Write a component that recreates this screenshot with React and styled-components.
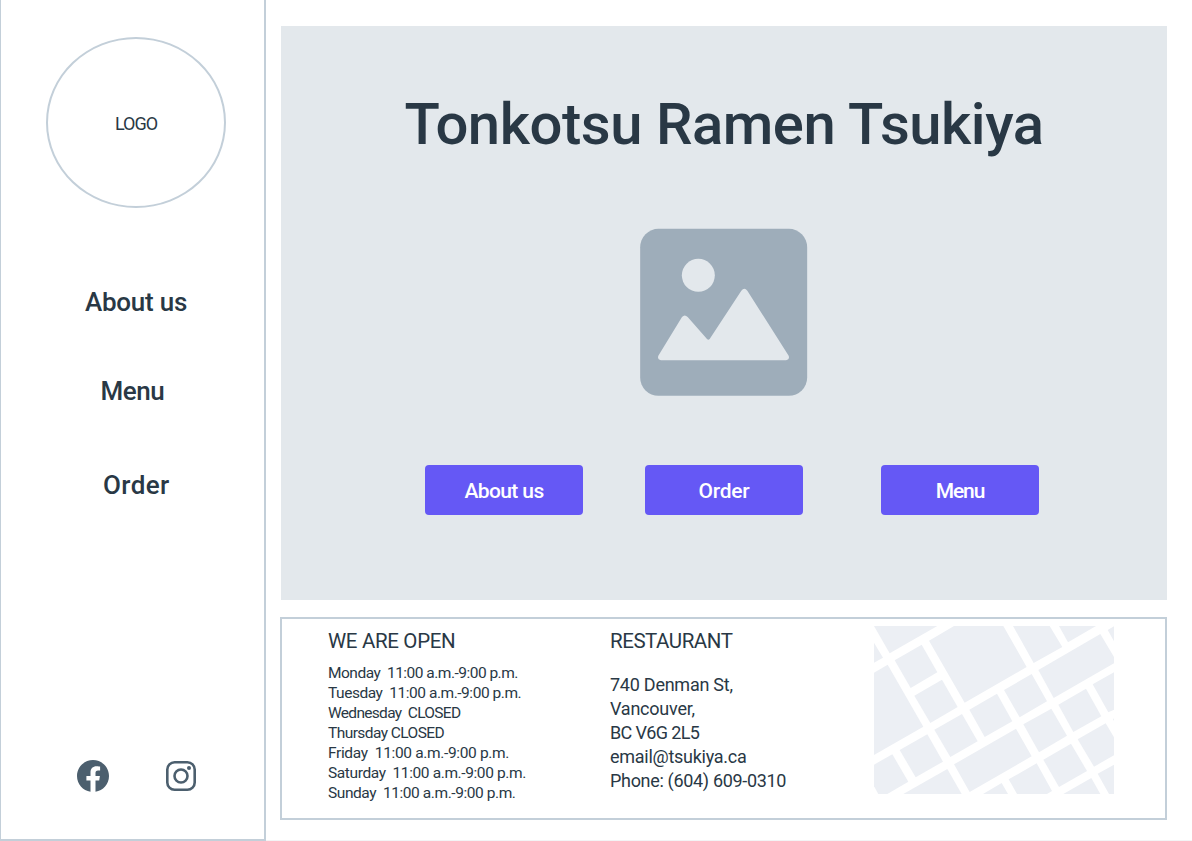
import React from "react";
import styled, { createGlobalStyle } from "styled-components";

const ink = "#293845";
const line = "#c3cfd9";
const fog = "#e3e8ec";
const accent = "#6558f5";

const GlobalStyle = createGlobalStyle`
  *, *::before, *::after { box-sizing: border-box; }
  html, body { margin: 0; padding: 0; background: #fff; }
  body {
    font-family: Roboto, "Liberation Sans", sans-serif;
    color: ${ink};
    overflow: hidden;
  }
`;

const Page = styled.div`
  display: flex;
  width: 1192px;
  height: 841px;
`;

const Sidebar = styled.aside`
  display: flex;
  flex-direction: column;
  flex: none;
  width: 266px;
  padding: 37px 0 47px;
  border: solid ${line};
  border-width: 0 2px 2px 1px;
`;

const Logo = styled.div`
  display: flex;
  align-items: center;
  justify-content: center;
  width: 180px;
  height: 171px;
  margin-left: 45px;
  padding-top: 1px;
  border: 2px solid ${line};
  border-radius: 50%;
  font-size: 18px;
  letter-spacing: -1px;
`;

const Nav = styled.nav`
  display: flex;
  flex-direction: column;
  align-items: flex-start;
  margin-top: 78px;
`;

const NavLink = styled.a`
  margin: ${(p) => p.$gap}px 0 0 ${(p) => p.$indent}px;
  font-size: 26px;
  font-weight: 500;
  line-height: 32px;
  letter-spacing: ${(p) => p.$tracking}px;
  white-space: nowrap;
`;

const Social = styled.div`
  display: flex;
  align-items: center;
  gap: 57px;
  margin-top: auto;
  padding-left: 76px;
`;

const Icon = styled.svg`
  display: block;
  flex: none;
  width: ${(p) => p.$w}px;
  height: ${(p) => p.$h}px;
`;

const Main = styled.main`
  display: flex;
  flex-direction: column;
  flex: 1;
  padding: 26px 25px 0 14px;
  border-bottom: 1px solid #f3f4f5;
`;

const Hero = styled.section`
  display: flex;
  flex-direction: column;
  align-items: center;
  height: 574px;
  margin-left: 1px;
  padding-top: 64px;
  background: ${fog};
`;

const Title = styled.h1`
  margin: 0 0 70px;
  font-size: 58px;
  font-weight: 500;
  line-height: 68px;
  letter-spacing: -0.46px;
  white-space: nowrap;
`;

const Actions = styled.div`
  display: flex;
  align-self: flex-start;
  margin: 69px 0 0 144px;
`;

const Button = styled.button`
  width: 158px;
  height: 50px;
  margin: 0 0 0 ${(p) => p.$gap}px;
  padding: 2px 0 0;
  border: 0;
  border-radius: 4px;
  background: ${accent};
  color: #fff;
  font: 500 21px Roboto, "Liberation Sans", sans-serif;
  letter-spacing: ${(p) => p.$tracking}px;
`;

const Footer = styled.footer`
  display: flex;
  align-items: flex-start;
  height: 203px;
  margin-top: 17px;
  padding-left: 46px;
  border: 2px solid ${line};
`;

const Column = styled.div`
  flex: none;
  width: ${(p) => p.$width}px;
  padding-top: 10px;
`;

const Heading = styled.h2`
  margin: 0;
  font-size: 20.5px;
  font-weight: 400;
  line-height: 24px;
  letter-spacing: ${(p) => p.$tracking}px;
`;

const Hours = styled.div`
  margin-top: 10px;
  font-size: 15.5px;
  line-height: 20px;
`;

const Address = styled.address`
  margin-top: 20px;
  font-size: 18px;
  font-style: normal;
  line-height: 24px;
`;

const Line = styled.div`
  letter-spacing: ${(p) => p.$tracking}px;
  white-space: pre;
`;

const MapArt = styled(Icon)`
  margin-top: 7px;
`;

const navLinks = [
  { label: "About us", gap: 0, indent: 84, tracking: -0.25 },
  { label: "Menu", gap: 57, indent: 99.5, tracking: -0.5 },
  { label: "Order", gap: 62, indent: 102, tracking: 0.4 },
];

const actions = [
  { label: "About us", gap: 0, tracking: -0.6 },
  { label: "Order", gap: 62, tracking: -0.2 },
  { label: "Menu", gap: 78, tracking: -1.1 },
];

const hours = [
  ["Monday  11:00 a.m.-9:00 p.m.", -0.51],
  ["Tuesday  11:00 a.m.-9:00 p.m.", -0.46],
  ["Wednesday  CLOSED", -0.69],
  ["Thursday CLOSED", -0.56],
  ["Friday  11:00 a.m.-9:00 p.m.", -0.34],
  ["Saturday  11:00 a.m.-9:00 p.m.", -0.39],
  ["Sunday  11:00 a.m.-9:00 p.m.", -0.43],
];

const address = [
  ["740 Denman St,", -0.25],
  ["Vancouver,", -0.23],
  ["BC V6G 2L5", -0.64],
  ["email@tsukiya.ca", -0.27],
  ["Phone: (604) 609-0310", -0.32],
];

const blocks = [
  "30,48 220,48 77,130",
  "30,98 57,143 30,158",
  "30,188 71,164 178,350 30,435",
  "92,151 173,104 220,187 140,234",
  "195,92 270,48 418,48 488,171 302,278",
  "447,48 557,48 595,111 509,159",
  "585,48 696,48 612,97",
  "731,60 750,49 750,94",
  "523,180 709,72 750,141 750,160 569,264",
  "420,240 503,192 549,274 467,322",
  "316,299 399,251 445,334 362,381",
  "151,257 234,209 281,291 199,339",
  "211,359 294,312 341,394 259,441",
  "107,420 190,373 237,455 155,502",
  "30,464 85,433 133,515 70,552 43,552 30,529",
  "270,463 456,356 503,439 317,546",
  "478,343 562,296 609,377 525,427",
  "583,284 666,236 712,319 628,366",
  "686,223 750,187 750,299 733,307",
  "641,388 725,340 750,382 750,436 690,470",
  "538,449 621,401 669,483 585,531",
  "118,552 250,477 293,552",
  "357,552 413,519 432,552",
  "434,508 518,460 564,543 549,552 459,552",
  "598,552 682,504 709,552",
  "701,491 750,464 750,552 735,552",
  "747,328 750,325 750,333",
];

const FacebookIcon = () => (
  <Icon $w={32} $h={32} viewBox="0 0 32 32" fill="#4c5f6e">
    <path d="M32 16C32 7.16 24.84 0 16 0S0 7.16 0 16c0 7.99 5.85 14.6 13.5 15.8V20.6H9.4V16h4.1v-3.5c0-4 2.4-6.2 6-6.2 1.75 0 3.6.3 3.6.3v3.9h-2c-2 0-2.6 1.25-2.6 2.5V16h4.4l-.7 4.6h-3.7v11.2C26.15 30.6 32 24 32 16z" />
  </Icon>
);

const InstagramIcon = () => (
  <Icon $w={30} $h={30} viewBox="0 0 30 30" fill="none" stroke="#4c5f6e" strokeWidth="2.6">
    <rect x="1.3" y="1.3" width="27.4" height="27.4" rx="7.3" />
    <circle cx="15" cy="15" r="6.5" />
    <circle cx="23" cy="7" r="2" fill="#4c5f6e" stroke="none" />
  </Icon>
);

const PictureIcon = () => (
  <Icon $w={168} $h={168} viewBox="60 54 504 504">
    <rect x="60.5" y="56.5" width="501" height="501" rx="55" fill="#9eadba" />
    <circle cx="235" cy="196" r="49.5" fill={fog} />
    <path
      fill={fog}
      d="M115 437 L186 321 Q194 312 203 321 L261 387 Q265 391 269 387 L364 242 Q373 231 382 242 L506 437 Q510 448 498 451 L123 451 Q111 448 115 437Z"
    />
  </Icon>
);

export default function App() {
  return (
    <>
      <GlobalStyle />
      <Page>
        <Sidebar>
          <Logo>LOGO</Logo>
          <Nav>
            {navLinks.map((l) => (
              <NavLink key={l.label} $gap={l.gap} $indent={l.indent} $tracking={l.tracking}>
                {l.label}
              </NavLink>
            ))}
          </Nav>
          <Social>
            <FacebookIcon />
            <InstagramIcon />
          </Social>
        </Sidebar>
        <Main>
          <Hero>
            <Title>Tonkotsu Ramen Tsukiya</Title>
            <PictureIcon />
            <Actions>
              {actions.map((a) => (
                <Button key={a.label} $gap={a.gap} $tracking={a.tracking}>
                  {a.label}
                </Button>
              ))}
            </Actions>
          </Hero>
          <Footer>
            <Column $width={282}>
              <Heading $tracking={-0.33}>WE ARE OPEN</Heading>
              <Hours>
                {hours.map(([text, tracking]) => (
                  <Line key={text} $tracking={tracking}>{text}</Line>
                ))}
              </Hours>
            </Column>
            <Column $width={264}>
              <Heading $tracking={-0.45}>RESTAURANT</Heading>
              <Address>
                {address.map(([text, tracking]) => (
                  <Line key={text} $tracking={tracking}>{text}</Line>
                ))}
              </Address>
            </Column>
            <MapArt $w={240} $h={168} viewBox="30 48 720 504" fill="#eceff4">
              {blocks.map((points) => (
                <polygon key={points} points={points} />
              ))}
            </MapArt>
          </Footer>
        </Main>
      </Page>
    </>
  );
}
